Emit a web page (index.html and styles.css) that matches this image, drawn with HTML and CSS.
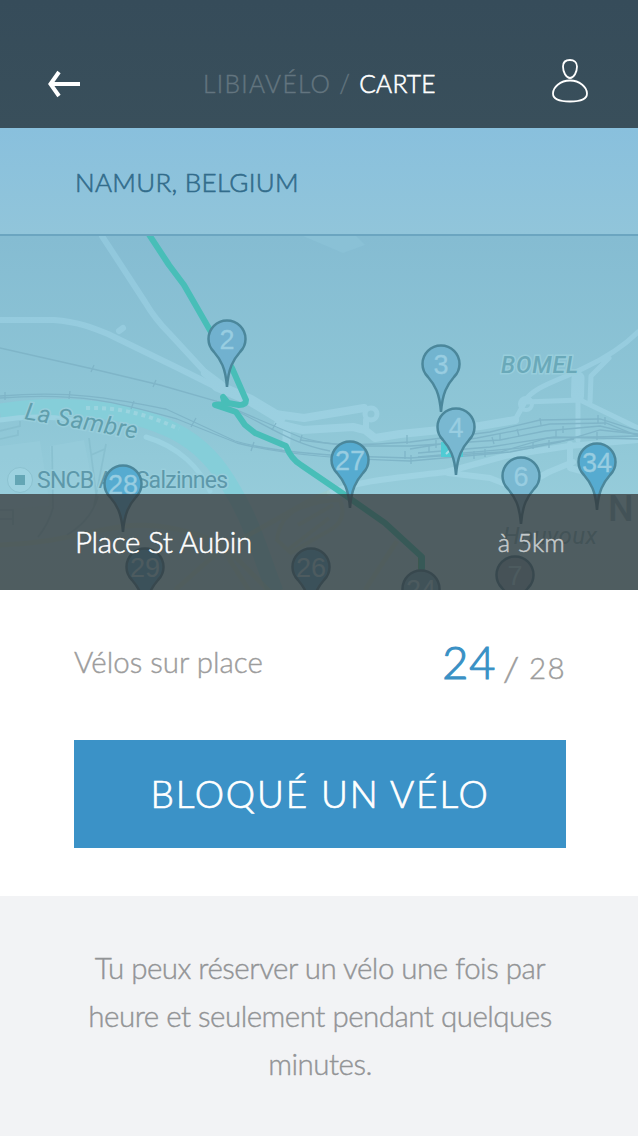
FILE: index.html
```html
<!DOCTYPE html>
<html lang="fr">
<head>
<meta charset="utf-8">
<title>LibiaVélo – Carte</title>
<link rel="stylesheet" href="styles.css">
</head>
<body>
<header class="topbar">
  <svg class="icon-back" viewBox="0 0 32 28" width="32" height="28"><path d="M32 14H3M11 2L2.500 14 11 26" fill="none" stroke="#fff" stroke-width="4"/></svg>
  <h1 class="crumbs"><span class="crumb-parent">LIBIAVÉLO /</span><span class="crumb-current">CARTE</span></h1>
  <svg class="icon-user" viewBox="0 0 38 46" width="38" height="46"><g fill="none" stroke="#fff" stroke-width="1.800"><path d="M19 2C15 2 12 4 12 8.500C12 14 15 20 19 20S26 14 26 8.500C26 4 23 2 19 2Z"/><path d="M19 22.500C9 22.500 2 29.500 2 35.500C2 41 8 43.500 19 43.500S36 41 36 35.500C36 29.500 29 22.500 19 22.500Z"/></g></svg>
</header>
<div class="location"><span class="location-name">NAMUR, BELGIUM</span></div>
<section class="map">
  <svg class="map-canvas" viewBox="0 236 638 354" width="638" height="354">
    <defs>
      <linearGradient id="land" x1="0" y1="0" x2="0" y2="1"><stop offset="0" stop-color="#85bcd2"/><stop offset=".5" stop-color="#8ec6d6"/><stop offset=".75" stop-color="#96ccda"/><stop offset="1" stop-color="#96ccd8"/></linearGradient>
      <linearGradient id="road" gradientUnits="userSpaceOnUse" x1="0" y1="236" x2="0" y2="480"><stop offset="0" stop-color="#90c7dc"/><stop offset="1" stop-color="#9fd3e2"/></linearGradient>
      <path id="pin" d="M0 0C-1.500 -19-6 -27-13 -35C-17 -39-18.500 -43-18.500 -48A18.500 18.500 0 0 1 18.500 -48C18.500 -43 17 -39 13 -35C6 -27 1.500 -19 0 0Z"/>
    </defs>
    <rect y="236" width="638" height="354" fill="url(#land)"/>
    <path d="M303 236H356L365 245 343 253Z" fill="#8ac1d6"/>
    <path d="M0 446L40 441 50 506 0 510ZM50 446L84 440 98 510H52Z" fill="#9bd0df" opacity=".4"/>
    <path d="M0 412C65 402 130 409 174 431C202 445 219 466 233 491C251 520 261 555 275 592" fill="none" stroke="#85ced9" stroke-width="17"/>
    <path d="M0 420C25 416 50 416 72 420M146 437C180 447 200 469 210 491" fill="none" stroke="#9bd2e1" stroke-width="5" stroke-linecap="round"/>
    <path d="M86 408C123 407 151 416 179 429" fill="none" stroke="#9bd4df" stroke-width="4" stroke-dasharray="4 4"/>

    <g fill="none" stroke="url(#road)" stroke-linecap="round" stroke-linejoin="round">
      <path stroke-width="6" d="M0 320H54C78 322 91 327 108 334L180 369 218 388M102 236L145 302Q155 319 169 333L205 372 220 388M119 331L123 328"/>
      <path stroke-width="11" d="M217 386L250 400 280 418"/>
      <path stroke-width="8" d="M205 373L221 385M275 414L304 418 364 408M278 424L303 430 353 427L365 430 375 438 400 434 480 426 515 420M287 430L286 447"/>
      <path stroke-width="5" d="M515 420L525 402 580 400 638 428M524 402C534 386 558 381 584 368C599 361 622 348 638 332M590 402L591 376 609 358"/>
      <path stroke-width="5" d="M578 440V380"/>
      <path stroke-width="13" d="M577.500 396L578 378"/>
      <path stroke-width="6" d="M330 493C360 480 395 478 446 472L505 456 569 446 638 440M448 473L490 478 518 489 549 472 573 462M570 444V468L596 475"/>
      <circle cx="371" cy="414" r="6" stroke-width="5"/><path stroke-width="6" d="M366 420V429"/><circle cx="526" cy="404" r="6" stroke-width="4"/>
    </g>
    <g fill="none" stroke="#7fb5c8" stroke-width="1.300">
      <path d="M0 348L93 369 160 385 216 401 260 420 300 437C327 446 355 446 410 442L490 432 540 420 600 419 638 431"/>
      <path d="M0 396C78 390 120 400 166 409L235 441C262 449 290 452 344 456L410 458 500 452 548 438 638 436"/>
      <path d="M0 398C82 392 120 403 177 419L237 443C275 453 325 459 410 461L510 452 560 442 600 430 638 434"/>
      <path d="M216 401C267 424 290 444 330 451M300 440L350 446 410 446 500 440 545 431 600 426 638 435M418 453L490 447 554 437 638 439M410 449L477 438 550 424 606 423 638 436M418 457L520 448 574 439"/>
      <path d="M94 365L91 372M156 380L153 387M70 391L69 399M134 401L131 409M196 418L191 427M276 423L272 430M302 435L300 442M254 442L251 451M5 392V400M407 435V444M405 451V459M411 455V464M429 444V452M436 440V448M474 451V459M492 437L494 444M500 433V440M517 429L519 436M533 442V449M540 418L541 425M556 430V437M563 426V433M598 415V423M597 432V440M485 449V457M605 417V425M549 440V448"/>
    </g>
    <g fill="none" stroke="#84bccc" stroke-width="1.700" opacity=".7">
      <path d="M0 431L20 426V421M0 439L18 435V430M89 438L97 500M106 444L94 506M91 455L105 449M52 446L53 508Q48 525 38 537M98 496Q92 520 67 535M0 510H13V525M0 519H14"/>
    </g>
    <g fill="none" stroke="#a3ccc2" stroke-width="5" opacity=".45">
      <path d="M0 545C52 544 87 531 126 526Q170 522 219 543L250 592M175 590L218 552 311 500 330 492M219 540L270 592M365 590L397 541"/>
      <path d="M277 540Q280 516 300 508T340 500Q348 520 330 530T291 553ZM298 525L333 505M289 549L329 518" stroke-width="4"/>
    </g>
    <path d="M418 550L425 559V567L418 570Z" fill="#57bca0"/>
    <path fill="none" stroke="#48beb8" stroke-width="6" stroke-linejoin="round" stroke-linecap="round" d="M148 233L169 265 184 285 211 332 232 368 246 400Q246 405 239 405L228 403 223 397 225 404 215 405 236 412 245 425 255 433 286 446Q291 459 301 465L345 495 385 523 422 557V568"/>
    <g class="map-label"><text x="24" y="419" font-size="24" transform="rotate(10 24 419)" textLength="114" font-style="italic" fill="#609eac">La Sambre</text><text x="501" y="373" font-size="23" font-weight="500" textLength="77" font-style="italic" fill="#6aa9b9">BOMEL</text><text x="503" y="544" font-size="24" textLength="94" font-style="italic" fill="#6eaab8">Houvoux</text><text x="37" y="488" font-size="23" textLength="191" fill="#5d98aa">SNCB Arr. Salzinnes</text><text class="map-city" x="608" y="521" font-size="36" font-weight="500" fill="#70a9b7">N</text></g>
    <circle cx="20" cy="480" r="12.500" fill="#9dd2e0" stroke="#8cc2d0"/><rect x="15" y="475" width="10" height="10" fill="#64a6b5"/>
    <rect x="441" y="442" width="22" height="15" fill="#50cbd4"/><path d="M447 445L450 450 446 454M450 450L455 455" stroke="#a8dce6" stroke-width="2" fill="none"/>
    <g class="pins">
      <g transform="translate(227 387)"><use href="#pin" fill="#71b1cf"/><text y="-38.500">2</text></g>
      <g transform="translate(441 412)"><use href="#pin" fill="#72b4cf"/><text y="-38.500">3</text></g>
      <g transform="translate(456 475)"><use href="#pin" fill="#79b8d1"/><text y="-38.500">4</text></g>
      <g transform="translate(350 508)"><use href="#pin" fill="#56abd0"/><text y="-38.500">27</text></g>
      <g transform="translate(521 524)"><use href="#pin" fill="#79b8d1"/><text y="-38.500">6</text></g>
      <g transform="translate(597 510)"><use href="#pin" fill="#56abd0"/><text y="-38.500">34</text></g>
      <g transform="translate(123 532)"><use href="#pin" fill="#56abd0"/><text y="-38.500">28</text></g>
      <g class="covered">
        <g transform="translate(145 615)"><use href="#pin" fill="#56a5c4"/><text y="-38.500">29</text></g>
        <g transform="translate(311 615)"><use href="#pin" fill="#56a5c4"/><text y="-38.500">26</text></g>
        <g transform="translate(421 637)"><use href="#pin" fill="#67a7bd"/><text y="-38.500">24</text></g>
        <g transform="translate(515 623)"><use href="#pin" fill="#79a7b7"/><text y="-38.500">7</text></g>
      </g>
    </g>
  </svg>
  <div class="station"><span class="station-name">Place St Aubin</span><span class="station-distance">à 5km</span></div>
</section>
<main class="details">
  <div class="availability"><span class="availability-label">Vélos sur place</span><span class="availability-count"><strong class="available">24</strong><span class="total"><span class="slash">/</span> 28</span></span></div>
  <button class="reserve">BLOQUÉ UN VÉLO</button>
</main>
<footer class="note"><p>Tu peux réserver un vélo une fois par<br>heure et seulement pendant quelques<br>minutes.</p></footer>
</body>
</html>
```
FILE: styles.css
```css
* { box-sizing: border-box; }
body { margin: 0; width: 638px; height: 1136px; overflow: hidden; background: #fff; font-family: Lato, "Open Sans", sans-serif; font-weight: 300; -webkit-text-stroke: .4px currentColor; }
svg { display: block; -webkit-text-stroke: 0; }
.topbar { height: 128px; padding: 40px 49px 0 48px; display: flex; align-items: center; justify-content: space-between; background: linear-gradient(#364c5a, #394f5b); }
.icon-user { margin-top: -7px; }
.crumbs { margin: 0 0 0 8px; display: flex; gap: 8px; font-size: 24.500px; font-weight: 300; line-height: 30px; white-space: nowrap; color: #fff; }
.crumb-parent { color: #63757f; letter-spacing: 1.300px; }
.crumb-current { letter-spacing: .3px; -webkit-text-stroke-width: .6px; }
.location { height: 108px; padding: 2px 75px 0; display: flex; align-items: center; border-bottom: 2px solid #6ba5c0; background: linear-gradient(#89c0dd, #91c5da); color: #326c8b; font-size: 26px; letter-spacing: .3px; -webkit-text-stroke-width: .6px; }
.map { position: relative; height: 354px; overflow: hidden; }
.map-label { font-family: Roboto, sans-serif; font-weight: 400; stroke: #98cedc; stroke-width: 3px; paint-order: stroke; }
.map-city { stroke: none; }
.pins use { stroke: #4b879b; stroke-width: 2.500px; }
.pins text { font: 400 27px "Liberation Sans", sans-serif; text-anchor: middle; fill: #98cde1; stroke: #98cde1; stroke-width: .3px; }
.pins .covered text { fill: #90c6d4; stroke: none; }
.station { position: absolute; left: 0; right: 0; bottom: 0; height: 96px; padding: 0 73px 2px 75px; display: flex; align-items: center; justify-content: space-between; background: rgba(49, 45, 45, .7); color: #fff; font-size: 29.500px; -webkit-text-stroke-width: .5px; }
.station-name { letter-spacing: -.3px; }
.station-distance { padding-top: 2px; color: #c5cacc; font-size: 25.500px; letter-spacing: .1px; }
.details { height: 306px; padding: 40px 72px 48px 74px; color: #9c9c9c; }
.availability { height: 110px; display: flex; justify-content: space-between; font-size: 29.500px; line-height: 64px; }
.availability-count { display: flex; align-items: baseline; gap: 9px; }
.available { color: #3a91c5; font-size: 45px; font-weight: 300; letter-spacing: 1px; -webkit-text-stroke-width: 1.200px; }
.total { letter-spacing: 1.400px; }
.slash { display: inline-block; transform: scale(1.300, 1.150); }
.reserve { display: block; width: 492px; height: 108px; padding: 0 0 2px; border: 0; background: #3b92c7; color: #fff; font: 300 37px Lato, sans-serif; letter-spacing: 1.850px; -webkit-text-stroke: .7px currentColor; }
.note { height: 240px; padding-top: 48px; background: #f2f3f5; color: #929496; text-align: center; font-size: 29.500px; line-height: 48px; letter-spacing: -.5px; }
.note p { margin: 0; padding-left: 2px; }
```
